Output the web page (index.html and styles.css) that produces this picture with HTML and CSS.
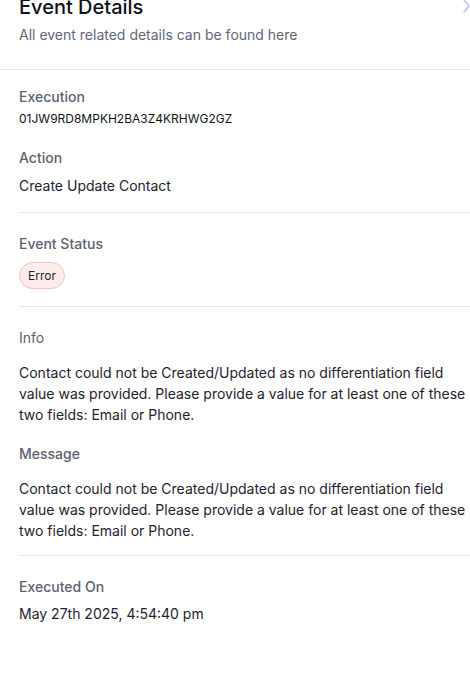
FILE: index.html
```html
<!DOCTYPE html>
<html lang="en">
<head>
<meta charset="utf-8">
<title>Event Details</title>
<link rel="stylesheet" href="styles.css">
</head>
<body>
<div class="panel">
  <header class="header">
    <div class="title-row">
      <h1 class="title">Event Details</h1>
      <svg class="chevron" width="10" height="14" viewBox="0 0 10 14" aria-hidden="true"><path d="M4 1 L9 7 L4 13" fill="none" stroke="#b9c1f6" stroke-width="1.5" stroke-linecap="round" stroke-linejoin="round"/></svg>
    </div>
    <p class="subtitle">All event related details can be found here</p>
  </header>

  <section class="section s1">
    <div class="field">
      <div class="label">Execution</div>
      <div class="value mono-ish">01JW9RD8MPKH2BA3Z4KRHWG2GZ</div>
    </div>
    <div class="field field-gap">
      <div class="label">Action</div>
      <div class="value v8">Create Update Contact</div>
    </div>
  </section>

  <section class="section s2">
    <div class="label">Event Status</div>
    <span class="badge">Error</span>
  </section>

  <section class="section s3">
    <div class="label label-light">Info</div>
    <p class="para">Contact could not be Created/Updated as no differentiation field value was provided. Please provide a value for at least one of these two fields: Email or Phone.</p>
    <div class="label msg">Message</div>
    <p class="para">Contact could not be Created/Updated as no differentiation field value was provided. Please provide a value for at least one of these two fields: Email or Phone.</p>
  </section>

  <section class="section s4">
    <div class="label">Executed On</div>
    <div class="value v7">May 27th 2025, 4:54:40 pm</div>
  </section>
</div>
</body>
</html>
```

FILE: styles.css
```css
* { box-sizing: border-box; }
html, body {
  margin: 0;
  padding: 0;
  background: #ffffff;
  overflow: hidden;
}
body {
  font-family: Inter, "Noto Sans", "Liberation Sans", sans-serif;
  color: #1d2230;
  width: 470px;
  height: 685px;
}
.panel {
  width: 470px;
}
.header {
  margin-top: -7px;
  padding: 0 0 24px 19px;
  border-bottom: 1px solid #e4e5ea;
}
.title-row {
  display: flex;
  align-items: center;
  justify-content: space-between;
}
.title {
  margin: 0;
  font-size: 20px;
  line-height: 28px;
  font-weight: 500;
  color: #101218;
}
.chevron {
  display: block;
  flex: none;
  margin-top: -2px;
}
.subtitle {
  margin: 4px 0 0;
  font-size: 14px;
  line-height: 20px;
  color: #5f6678;
}
.section {
  margin-left: 19px;
  border-bottom: 1px solid #e4e5ea;
}
.s1 { padding: 17px 0 16px; }
.s2 { padding: 21px 0 17px; }
.s3 { padding: 21px 0 14px; }
.s4 { padding: 21px 0 0; border-bottom: none; }
.label {
  font-size: 14px;
  line-height: 20px;
  font-weight: 500;
  color: #5b6171;
}
.label-light { font-weight: 400; }
.value {
  font-size: 14px;
  line-height: 20px;
  color: #1d2230;
}
.mono-ish {
  font-size: 12px;
  line-height: 16px;
  margin-top: 4px;
  color: #111318;
}
.field-gap { margin-top: 21px; }
.v8 { margin-top: 8px; }
.v7 { margin-top: 7px; }
.badge {
  display: inline-flex;
  align-items: center;
  height: 27px;
  margin-top: 8px;
  padding: 0 8px;
  border: 1px solid #f3c3c3;
  border-radius: 14px;
  background: #fdecec;
  font-size: 12px;
  color: #1f2330;
}
.para {
  margin: 14px 0 0;
  font-size: 14px;
  line-height: 21px;
  color: #1d2230;
}
.msg { margin-top: 19px; }
```
